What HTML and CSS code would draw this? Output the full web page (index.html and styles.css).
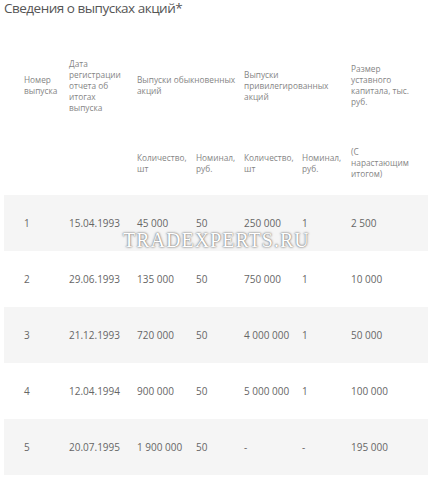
FILE: index.html
```html
<!DOCTYPE html>
<html lang="ru">
<head>
<meta charset="utf-8">
<link rel="stylesheet" href="styles.css">
</head>
<body>
<div class="page">
  <h2 class="title">Сведения о выпусках акций*</h2>
  <div class="wrap">
    <table class="tbl">
      <colgroup>
        <col class="c1"><col class="c2"><col class="c3"><col class="c4"><col class="c5"><col class="c6"><col class="c7">
      </colgroup>
      <thead>
        <tr class="h1">
          <th>Номер<br>выпуска</th>
          <th>Дата<br>регистрации<br>отчета об<br>итогах<br>выпуска</th>
          <th colspan="2">Выпуски обыкновенных<br>акций</th>
          <th colspan="2">Выпуски<br>привилегированных<br>акций</th>
          <th>Размер<br>уставного<br>капитала, тыс.<br>руб.</th>
        </tr>
        <tr class="h2">
          <th></th>
          <th></th>
          <th>Количество,<br>шт</th>
          <th>Номинал,<br>руб.</th>
          <th>Количество,<br>шт</th>
          <th>Номинал,<br>руб.</th>
          <th>(С<br>нарастающим<br>итогом)</th>
        </tr>
      </thead>
      <tbody>
        <tr class="odd"><td>1</td><td>15.04.1993</td><td>45 000</td><td>50</td><td>250 000</td><td>1</td><td>2 500</td></tr>
        <tr><td>2</td><td>29.06.1993</td><td>135 000</td><td>50</td><td>750 000</td><td>1</td><td>10 000</td></tr>
        <tr class="odd"><td>3</td><td>21.12.1993</td><td>720 000</td><td>50</td><td>4 000 000</td><td>1</td><td>50 000</td></tr>
        <tr><td>4</td><td>12.04.1994</td><td>900 000</td><td>50</td><td>5 000 000</td><td>1</td><td>100 000</td></tr>
        <tr class="odd"><td>5</td><td>20.07.1995</td><td>1 900 000</td><td>50</td><td>-</td><td>-</td><td>195 000</td></tr>
      </tbody>
    </table>
    <div class="watermark">TRADEXPERTS.RU</div>
  </div>
</div>
</body>
</html>
```

FILE: styles.css
```css
html, body {
  margin: 0;
  padding: 0;
  background: #fff;
}
.page {
  font-family: "Open Sans", "Noto Sans", sans-serif;
  padding-left: 4px;
  width: 424px;
}
.title {
  margin: 0;
  font-size: 13.5px;
  line-height: 16px;
  letter-spacing: -0.5px;
  font-weight: 400;
  color: #555;
  height: 40px;
}
.wrap {
  position: relative;
}
.tbl {
  width: 424px;
  border-collapse: collapse;
  table-layout: fixed;
}
.c1 { width: 45px; }
.c2 { width: 68px; }
.c3 { width: 59px; }
.c4 { width: 48px; }
.c5 { width: 58px; }
.c6 { width: 49px; }
.c7 { width: 97px; }
.tbl th {
  font-weight: 400;
  font-size: 8.3px;
  line-height: 11px;
  color: #858585;
  text-align: left;
  vertical-align: middle;
  padding: 0 0 0 20px;
  white-space: nowrap;
}
.h1 th { height: 90px; }
.h2 th { height: 65px; }
.tbl td {
  font-size: 10px;
  color: #666;
  height: 56px;
  padding: 0 0 0 20px;
  vertical-align: middle;
  white-space: nowrap;
}
.tbl tr.odd td {
  background: #f5f5f5;
}
.watermark {
  position: absolute;
  left: 119px;
  top: 189px;
  font-family: "Liberation Serif", serif;
  font-size: 20px;
  letter-spacing: 1px;
  color: #fff;
  text-shadow: 0 0 2px #888, 0 0 1px #777, 0 0 3px #aaa;
}
```
